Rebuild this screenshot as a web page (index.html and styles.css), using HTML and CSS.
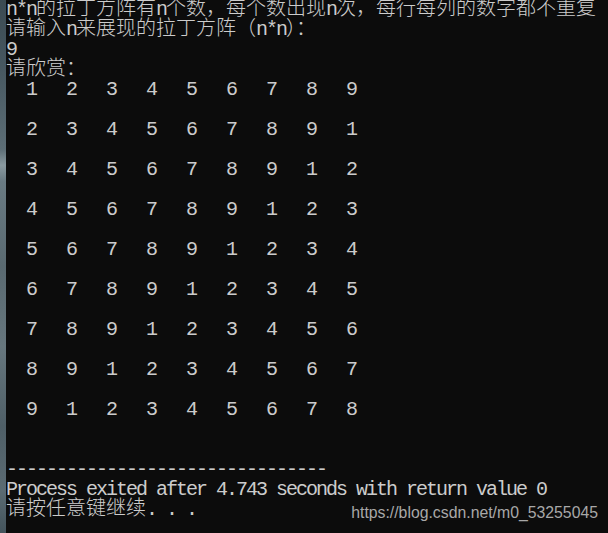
FILE: index.html
```html
<!DOCTYPE html>
<html lang="zh-CN">
<head>
<meta charset="utf-8">
<title>Console</title>
<link rel="stylesheet" href="styles.css">
</head>
<body>
<div class="screen">
  <div class="desktop-edge"></div>
  <div class="console">
    <div class="line">n*n<span class="cjk">的拉丁方阵有</span>n<span class="cjk">个数，每个数出现</span>n<span class="cjk">次，每行每列的数字都不重复</span></div>
    <div class="line"><span class="cjk">请输入</span>n<span class="cjk">来展现的拉丁方阵（</span>n*n<span class="cjk">）：</span></div>
    <div class="line">9</div>
    <div class="line"><span class="cjk">请欣赏：</span></div>
    <div class="line">  1   2   3   4   5   6   7   8   9</div>
    <div class="line"></div>
    <div class="line">  2   3   4   5   6   7   8   9   1</div>
    <div class="line"></div>
    <div class="line">  3   4   5   6   7   8   9   1   2</div>
    <div class="line"></div>
    <div class="line">  4   5   6   7   8   9   1   2   3</div>
    <div class="line"></div>
    <div class="line">  5   6   7   8   9   1   2   3   4</div>
    <div class="line"></div>
    <div class="line">  6   7   8   9   1   2   3   4   5</div>
    <div class="line"></div>
    <div class="line">  7   8   9   1   2   3   4   5   6</div>
    <div class="line"></div>
    <div class="line">  8   9   1   2   3   4   5   6   7</div>
    <div class="line"></div>
    <div class="line">  9   1   2   3   4   5   6   7   8</div>
    <div class="line"></div>
    <div class="line"></div>
    <div class="line">--------------------------------</div>
    <div class="line">Process exited after 4.743 seconds with return value 0</div>
    <div class="line"><span class="cjk">请按任意键继续</span>. . .</div>
    <div class="watermark">https://blog.csdn.net/m0_53255045</div>
  </div>
</div>
</body>
</html>
```

FILE: styles.css
```css
html, body {
  margin: 0;
  padding: 0;
  background: #0c0c0c;
}

.screen {
  display: flex;
  width: 608px;
  height: 533px;
  overflow: hidden;
}

.desktop-edge {
  width: 6px;
  flex: none;
  background: linear-gradient(180deg,
    #3b4a52 0%,
    #465760 12%,
    #5d6e76 28%,
    #8a9aa0 31%,
    #6a7b83 34%,
    #5a6a71 50%,
    #67777e 65%,
    #4f5f67 80%,
    #5b6b73 92%,
    #44545c 100%);
}

.console {
  position: relative;
  flex: 1;
  display: flex;
  flex-direction: column;
  background: #0c0c0c;
  color: #cccccc;
  font-family: "Liberation Mono", "Noto Sans CJK SC", monospace;
  font-size: 20px;
  letter-spacing: -2px;
}

.line {
  height: 20px;
  line-height: 20px;
  white-space: pre;
  flex: none;
}

.cjk {
  font-family: "Noto Sans CJK SC", sans-serif;
  letter-spacing: 0;
  font-weight: 300;
  line-height: 1px;
}

.watermark {
  position: absolute;
  right: 10px;
  top: 503px;
  color: #a8a8a8;
  font-family: "Liberation Sans", Arial, sans-serif;
  font-size: 15.8px;
  line-height: 20px;
  letter-spacing: 0;
}
```
